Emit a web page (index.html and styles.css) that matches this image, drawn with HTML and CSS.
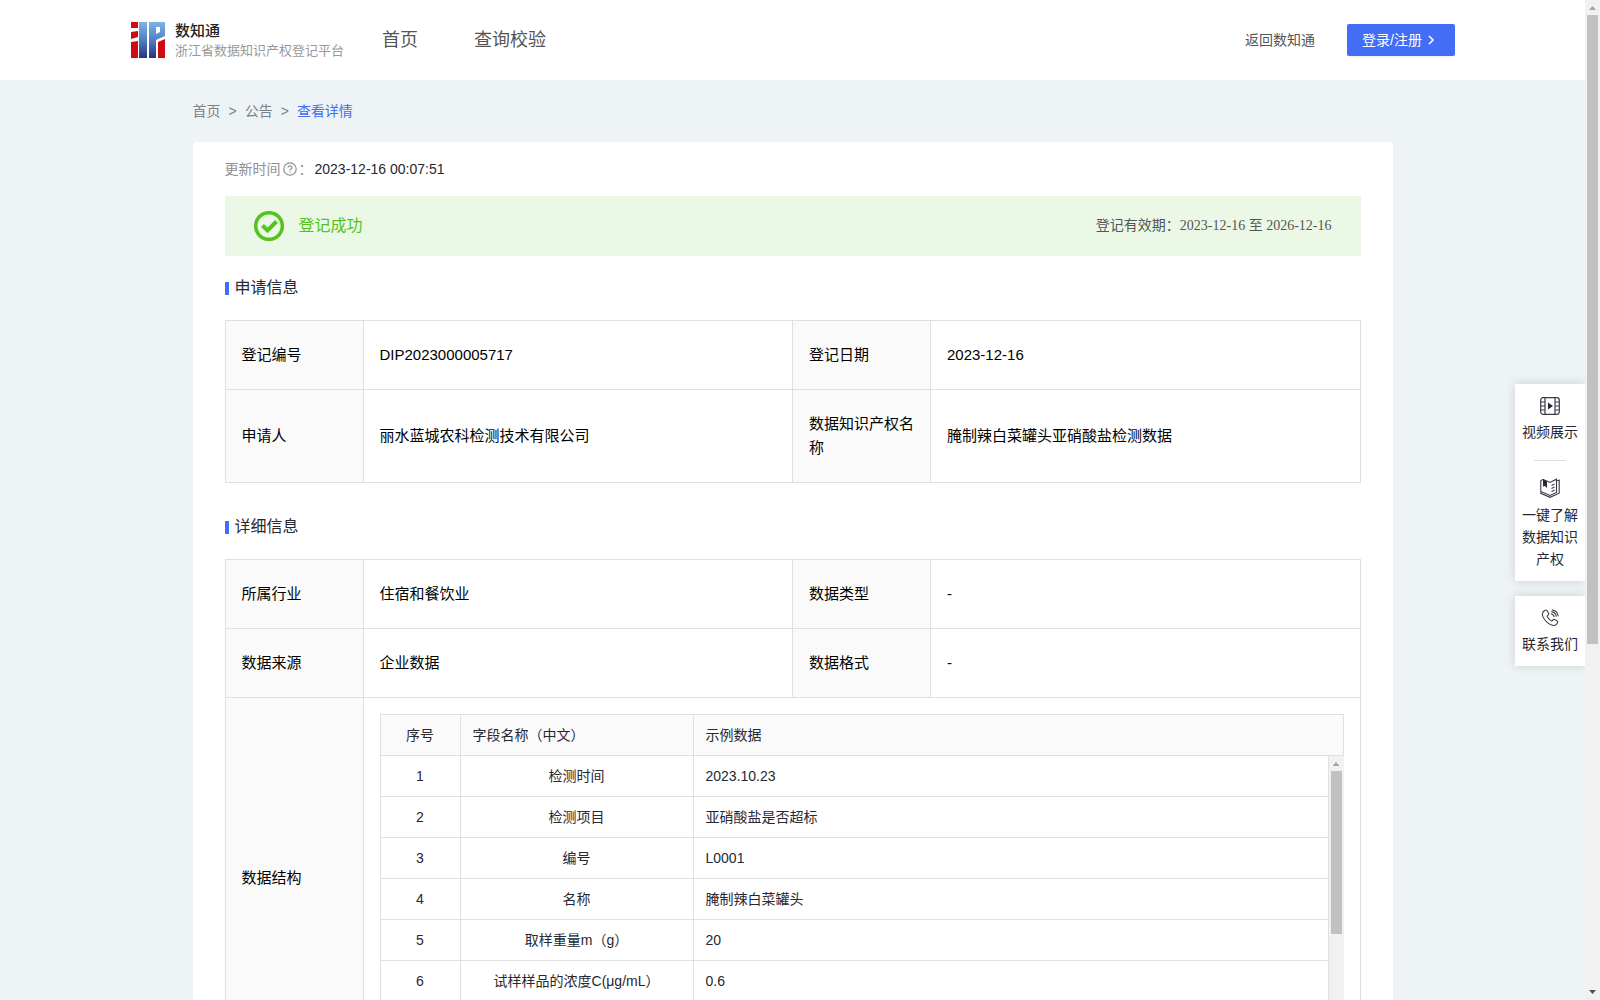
FILE: index.html
```
<!DOCTYPE html>
<html lang="zh-CN">
<head>
  <meta charset="UTF-8">
  <meta name="viewport" content="width=device-width, initial-scale=1.0">
  <title>数知通 - 浙江省数据知识产权登记平台</title>
  <link rel="stylesheet" href="styles.css">
</head>
<body>
  <div class="page">
    <header class="header">
      <a class="logo" href="#">
        <svg width="34" height="36" viewBox="0 0 34 36">
          <defs>
            <linearGradient id="blue" x1="0" y1="0" x2="0" y2="36" gradientUnits="userSpaceOnUse">
              <stop offset="0" stop-color="#7fb4e6"/>
              <stop offset="0.5" stop-color="#5080c4"/>
              <stop offset="1" stop-color="#26337d"/>
            </linearGradient>
          </defs>
          <path fill="#cf0a12" d="M0 0h7v6H0zM0 10l7-1v6l-7 2zM0 20l7-1v17H0zM27 20l7-3v19h-7z"/>
          <path fill="url(#blue)" fill-rule="evenodd" d="M8 0h8v36H8zM18 0h16v14l-9 4v18h-7zM25 5v7l4-2V5z"/>
        </svg>
        <span class="logo-text">
          <strong>数知通</strong>
          <small>浙江省数据知识产权登记平台</small>
        </span>
      </a>
      <nav class="nav">
        <a href="#">首页</a>
        <a href="#">查询校验</a>
      </nav>
      <a class="back-link" href="#">返回数知通</a>
      <button class="login-button" type="button">
        登录/注册
        <svg width="8" height="10" viewBox="0 0 8 10"><path d="M2 1l4 4-4 4" fill="none" stroke="#fff" stroke-width="1.5"/></svg>
      </button>
    </header>

    <main class="main">
      <nav class="breadcrumb">
        <a href="#">首页</a><span>&gt;</span><a href="#">公告</a><span>&gt;</span><a class="current" href="#">查看详情</a>
      </nav>

      <div class="card">
        <div class="update">
          <span>更新时间</span>
          <svg width="14" height="14" viewBox="0 0 14 14" fill="none" stroke="#909094" stroke-width="1.2">
            <circle cx="7" cy="7" r="6.2"/>
            <path d="M5.100 5.600a1.900 1.700 0 1 1 2.800 1.500q-.9.400-.9 1.300M7 9.500v1.200"/>
          </svg>
          <span>：</span>
          <time>2023-12-16 00:07:51</time>
        </div>

        <div class="banner">
          <svg width="30" height="30" viewBox="0 0 30 30" fill="none" stroke="#52c41a">
            <circle cx="15" cy="15" r="13.300" stroke-width="3.500"/>
            <path d="M8.500 14.500l5 5 9-9" stroke-width="4"/>
          </svg>
          <span class="status">登记成功</span>
          <span class="validity">登记有效期：2023-12-16 至 2026-12-16</span>
        </div>

        <h2 class="section-title">申请信息</h2>
        <table class="info">
          <tr>
            <th>登记编号</th>
            <td>DIP2023000005717</td>
            <th>登记日期</th>
            <td>2023-12-16</td>
          </tr>
          <tr>
            <th>申请人</th>
            <td>丽水蓝城农科检测技术有限公司</td>
            <th>数据知识产权名称</th>
            <td>腌制辣白菜罐头亚硝酸盐检测数据</td>
          </tr>
        </table>

        <h2 class="section-title">详细信息</h2>
        <table class="info">
          <tr>
            <th>所属行业</th>
            <td>住宿和餐饮业</td>
            <th>数据类型</th>
            <td>-</td>
          </tr>
          <tr>
            <th>数据来源</th>
            <td>企业数据</td>
            <th>数据格式</th>
            <td>-</td>
          </tr>
          <tr>
            <th>数据结构</th>
            <td class="structure" colspan="3">
              <table class="fields fields-head">
                <tr>
                  <th class="col-num">序号</th>
                  <th class="col-name">字段名称（中文）</th>
                  <th>示例数据</th>
                </tr>
              </table>
              <div class="fields-body">
                <table class="fields">
                  <tr><td class="col-num">1</td><td class="col-name">检测时间</td><td>2023.10.23</td></tr>
                  <tr><td class="col-num">2</td><td class="col-name">检测项目</td><td>亚硝酸盐是否超标</td></tr>
                  <tr><td class="col-num">3</td><td class="col-name">编号</td><td>L0001</td></tr>
                  <tr><td class="col-num">4</td><td class="col-name">名称</td><td>腌制辣白菜罐头</td></tr>
                  <tr><td class="col-num">5</td><td class="col-name">取样重量m（g）</td><td>20</td></tr>
                  <tr><td class="col-num">6</td><td class="col-name">试样样品的浓度C(μg/mL）</td><td>0.6</td></tr>
                </table>
                <div class="scrollbar">
                  <span class="arrow-up"></span>
                  <span class="track"><span class="thumb thumb-fields"></span></span>
                  <span class="arrow-down"></span>
                </div>
              </div>
            </td>
          </tr>
        </table>
      </div>
    </main>

    <aside class="side-tools">
      <div class="side-box">
        <a href="#">
          <svg width="20" height="18" viewBox="0 0 20 18" fill="none" stroke="#3a3b46" stroke-width="1.2">
            <rect x="0.700" y="0.700" width="18.600" height="16.600" rx="2.500"/>
            <path d="M5 1v16M15 1v16M1 5h4M1 9h4M1 13h4M15 5h4M15 9h4M15 13h4"/>
            <path d="M8 5.500l5 3.500-5 3.500z" fill="#272833" stroke="none"/>
          </svg>
          视频展示
        </a>
        <hr>
        <a href="#">
          <svg width="20" height="20" viewBox="0 0 20 20" fill="none" stroke="#3a3b46" stroke-width="1.1">
            <path d="M7 3l3 1.500 6.500-3.300v13.300L10 17.500 .8 13.500V2.500L3 1.500M16.500 2.800l2.700-.6v13L10 19.300l-9.200-4v-2M11.500 7.500l3-1.400M11.500 10.500l3-1.400M11.500 13.500l3-1.400"/>
            <path d="M3 .8l4 2V10L5 8 3 8.500z" fill="#272833" stroke="none"/>
          </svg>
          一键了解数据知识产权
        </a>
      </div>
      <div class="side-box">
        <a href="#">
          <svg width="18" height="18" viewBox="0 0 20 20" fill="none" stroke="#3a3b46" stroke-width="1.2">
            <path d="M4.500 1.500c1-.7 2-.2 2.700 1l1.200 2.300c.5 1 .1 1.700-.9 2.300-.8.500-.8 1-.3 1.900 1 1.700 2.300 3 3.900 3.900.9.500 1.400.4 1.900-.4.600-1 1.300-1.200 2.300-.7l2.200 1.300c1.200.7 1.300 1.700.6 2.700-1.300 2.200-3.700 3-6.300 2-4.600-1.800-7.900-5.200-9.800-9.600C1 5.300 2 2.800 4.500 1.500z"/>
            <path d="M11 5.300c2 .3 3.300 1.600 3.700 3.600M11.500 2.900c3.200.4 5.200 2.400 5.600 5.600M12 .8c4 .5 6.700 3.200 7.200 7.200"/>
          </svg>
          联系我们
        </a>
      </div>
    </aside>
  </div>

  <div class="scrollbar">
    <span class="arrow-up"></span>
    <span class="track"><span class="thumb thumb-page"></span></span>
    <span class="arrow-down"></span>
  </div>
</body>
</html>
```
FILE: styles.css
```
* {
    box-sizing: border-box;
}
body {
    display: flex;
    height: 100vh;
    margin: 0;
    overflow: hidden;
    background-color: #eef3f6;
    font-family: "Liberation Sans", "Noto Sans CJK SC", sans-serif;
    font-size: 14px;
    line-height: 22px;
    color: #272833;
}
a {
    color: inherit;
    text-decoration: none;
}
svg {
    flex: none;
}
.page {
    position: relative;
    flex: 1;
    overflow: hidden;
}

/* header */
.header {
    display: flex;
    align-items: center;
    height: 80px;
    padding: 0 130px 0 131px;
    background-color: #fff;
    color: #555;
}
.logo {
    display: flex;
    align-items: center;
    gap: 10px;
    width: 251px;
}
.logo-text {
    display: flex;
    flex-direction: column;
    padding-top: 1px;
    line-height: 20px;
    white-space: nowrap;
}
.logo-text strong {
    font-size: 15px;
    font-weight: 500;
    color: #222;
}
.logo-text small {
    font-size: 13px;
    color: #999;
}
.nav {
    display: flex;
    flex: 1;
    gap: 56px;
    font-size: 18px;
}
.login-button {
    display: flex;
    align-items: center;
    gap: 5px;
    height: 32px;
    margin-left: 32px;
    padding: 0 20px 0 15px;
    border: none;
    border-radius: 2px;
    background-color: #446df6;
    box-shadow: 0 2px 0 rgba(0, 0, 0, 0.04);
    font: inherit;
    color: #fff;
    cursor: pointer;
}

/* content */
.main {
    max-width: 1200px;
    margin: 0 auto;
}
.breadcrumb {
    display: flex;
    gap: 8px;
    padding: 20px 0;
    color: #808185;
}
.breadcrumb .current {
    color: #446df6;
}
.card {
    padding: 16px 32px 32px;
    border-radius: 4px;
    background-color: #fff;
}
.update {
    display: flex;
    align-items: center;
    gap: 2px;
    margin-bottom: 16px;
    color: #909094;
}
.update time {
    color: #272833;
}
.banner {
    display: flex;
    align-items: center;
    gap: 15px;
    height: 60px;
    padding: 0 29px;
    background-color: #ebf8e6;
}
.status {
    flex: 1;
    font-size: 16px;
    color: #52c41a;
}
.validity {
    font-family: "Liberation Serif", "Noto Sans CJK SC", serif;
    color: #555;
}
.section-title {
    display: flex;
    align-items: center;
    gap: 6px;
    margin: 20px 0;
    font-size: 16px;
    font-weight: normal;
    line-height: 24px;
}
.section-title::before {
    content: "";
    width: 4px;
    height: 13px;
    background-color: #446df6;
}

/* info tables */
.info {
    width: 100%;
    margin-bottom: 32px;
    border-collapse: collapse;
    table-layout: fixed;
    font-size: 15px;
    line-height: 24px;
    color: #000;
}
.info th,
.info td {
    padding: 22px 16px;
    border: 1px solid #e0e0e0;
    font-weight: normal;
    text-align: left;
}
.info th {
    width: 138px;
    background-color: #fafafa;
}
.info .structure {
    padding: 16px;
}
.fields {
    flex: 1;
    width: 100%;
    border-collapse: separate;
    border-spacing: 0;
    border-left: 1px solid #e0e0e0;
    table-layout: fixed;
    font-size: 14px;
    line-height: 22px;
    color: #272833;
}
.info .fields th,
.info .fields td {
    width: auto;
    padding: 9px 12px;
    border-width: 0 1px 1px 0;
}
.info .fields-head th {
    border-top-width: 1px;
}
.info .fields .col-num {
    width: 80px;
    text-align: center;
}
.info .fields .col-name {
    width: 233px;
}
.info .fields td.col-name {
    text-align: center;
}
.fields-body {
    display: flex;
    align-items: flex-start;
    height: 286px;
    overflow: hidden;
}

/* scrollbars */
.scrollbar {
    display: flex;
    flex-direction: column;
    align-self: stretch;
    width: 15px;
    background-color: #f1f1f1;
}
.track {
    flex: 1;
    padding: 0 2px;
}
.thumb {
    display: block;
    background-color: #c1c1c1;
}
.thumb-page {
    height: 629px;
}
.thumb-fields {
    height: 163px;
}
.arrow-up,
.arrow-down {
    width: 7px;
    height: 15px;
    margin: 0 4px;
    background-color: #a3a3a3;
    clip-path: polygon(0 10px, 50% 6px, 100% 10px);
}
.arrow-down {
    background-color: #505050;
    clip-path: polygon(0 5px, 100% 5px, 50% 9px);
}

/* floating tools */
.side-tools {
    position: absolute;
    top: 384px;
    right: 0;
    display: flex;
    flex-direction: column;
    gap: 15px;
    width: 70px;
}
.side-box {
    padding: 13px 7px 11px;
    background-color: #fff;
    box-shadow: 0 0 10px rgba(0, 0, 0, 0.15);
    text-align: center;
}
.side-box a {
    display: flex;
    flex-direction: column;
    align-items: center;
    gap: 6px;
}
.side-box hr {
    width: 32px;
    margin: 17px auto;
    border: none;
    border-top: 1px solid #e0e0e0;
}
```
